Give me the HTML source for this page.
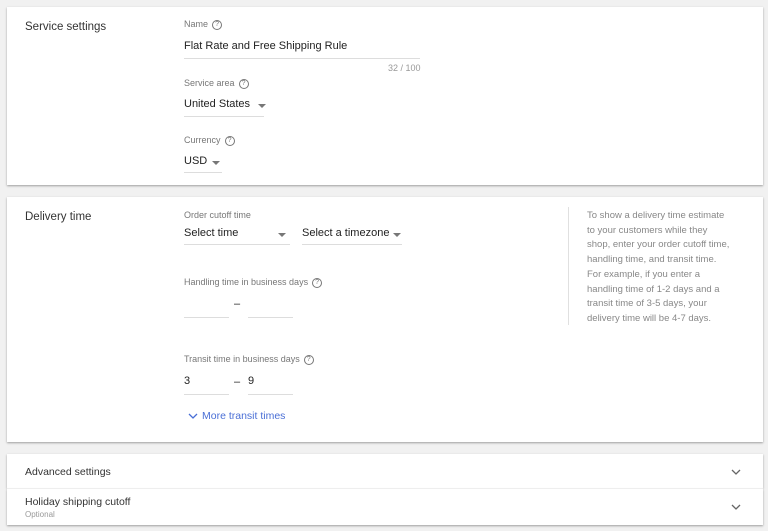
<!DOCTYPE html><html><head><style>
body{margin:0;width:768px;height:531px;background:#f1f1f1;font-family:"Liberation Sans",sans-serif;position:relative;overflow:hidden;color:#202124}
.card{position:absolute;left:7px;width:756px;background:#fff;box-shadow:0 1px 2px rgba(0,0,0,.35)}
.a{position:absolute;white-space:nowrap}
.lbl{font-size:9px;color:#777}
.val{font-size:11px;color:#222}
.ul{position:absolute;height:1px;background:#ddd}
.q{display:inline-block;width:8px;height:8px;border:1px solid #777;border-radius:50%;font-size:7px;line-height:8px;text-align:center;color:#777;margin-left:4px;vertical-align:middle}
.tri{position:absolute;width:0;height:0;border-left:4px solid transparent;border-right:4px solid transparent;border-top:4px solid #777}
.title{font-size:11.5px;color:#333}
.help{font-size:9.5px;color:#888;line-height:14.7px}
</style></head><body>
<div class="card" style="top:7px;height:178px">
<div class="a title" style="left:18px;top:14px">Service settings</div>
<div class="a lbl" style="left:177px;top:12px">Name<span class="q">?</span></div>
<div class="a val" style="left:177px;top:33px">Flat Rate and Free Shipping Rule</div>
<div class="ul" style="left:177px;top:51px;width:236px"></div>
<div class="a lbl" style="left:381px;top:56px;color:#999">32 / 100</div>
<div class="a lbl" style="left:177px;top:71px">Service area<span class="q">?</span></div>
<div class="a val" style="left:177px;top:91px">United States</div>
<div class="tri" style="left:251px;top:97px"></div>
<div class="ul" style="left:177px;top:109px;width:80px"></div>
<div class="a lbl" style="left:177px;top:128px">Currency<span class="q">?</span></div>
<div class="a val" style="left:177px;top:148px">USD</div>
<div class="tri" style="left:205px;top:154px"></div>
<div class="ul" style="left:177px;top:165px;width:38px"></div>
</div>
<div class="card" style="top:197px;height:245px">
<div class="a title" style="left:18px;top:14px">Delivery time</div>
<div class="a lbl" style="left:177px;top:13px">Order cutoff time</div>
<div class="a val" style="left:177px;top:30px">Select time</div>
<div class="tri" style="left:271px;top:36px"></div>
<div class="ul" style="left:177px;top:47px;width:106px"></div>
<div class="a val" style="left:295px;top:30px">Select a timezone</div>
<div class="tri" style="left:386px;top:36px"></div>
<div class="ul" style="left:295px;top:47px;width:100px"></div>
<div class="a lbl" style="left:177px;top:80px">Handling time in business days<span class="q">?</span></div>
<div class="a val" style="left:227px;top:101px">–</div>
<div class="ul" style="left:177px;top:120px;width:45px"></div>
<div class="ul" style="left:241px;top:120px;width:45px"></div>
<div class="a lbl" style="left:177px;top:157px">Transit time in business days<span class="q">?</span></div>
<div class="a val" style="left:177px;top:178px">3</div>
<div class="a val" style="left:227px;top:179px">–</div>
<div class="a val" style="left:241px;top:178px">9</div>
<div class="ul" style="left:177px;top:197px;width:45px"></div>
<div class="ul" style="left:241px;top:197px;width:45px"></div>
<svg class="a" style="left:181px;top:215px" width="10" height="8"><path d="M1 2l4 4 4-4" stroke="#4a6fd6" stroke-width="1.3" fill="none"/></svg>
<div class="a" style="left:195px;top:213px;font-size:10.5px;color:#4a6fd6">More transit times</div>
<div class="a" style="left:561px;top:10px;width:1px;height:118px;background:#e0e0e0"></div>
<div class="a help" style="left:580px;top:12px">To show a delivery time estimate<br>to your customers while they<br>shop, enter your order cutoff time,<br>handling time, and transit time.<br>For example, if you enter a<br>handling time of 1-2 days and a<br>transit time of 3-5 days, your<br>delivery time will be 4-7 days.</div>
</div>
<div class="card" style="top:454px;height:34px">
<div class="a" style="left:18px;top:12px;font-size:10.5px;color:#333">Advanced settings</div>
<svg class="a" style="left:724px;top:14px" width="10" height="8"><path d="M1 2l4 4 4-4" stroke="#666" stroke-width="1.3" fill="none"/></svg>
</div>
<div class="card" style="top:489px;height:36px">
<div class="a" style="left:18px;top:7px;font-size:10.5px;color:#333">Holiday shipping cutoff</div>
<div class="a" style="left:18px;top:21px;font-size:8px;color:#999">Optional</div>
<div class="a" style="left:0;top:-1px;width:756px;height:1px;background:#eee"></div>
<svg class="a" style="left:724px;top:14px" width="10" height="8"><path d="M1 2l4 4 4-4" stroke="#666" stroke-width="1.3" fill="none"/></svg>
</div>
</body></html>
